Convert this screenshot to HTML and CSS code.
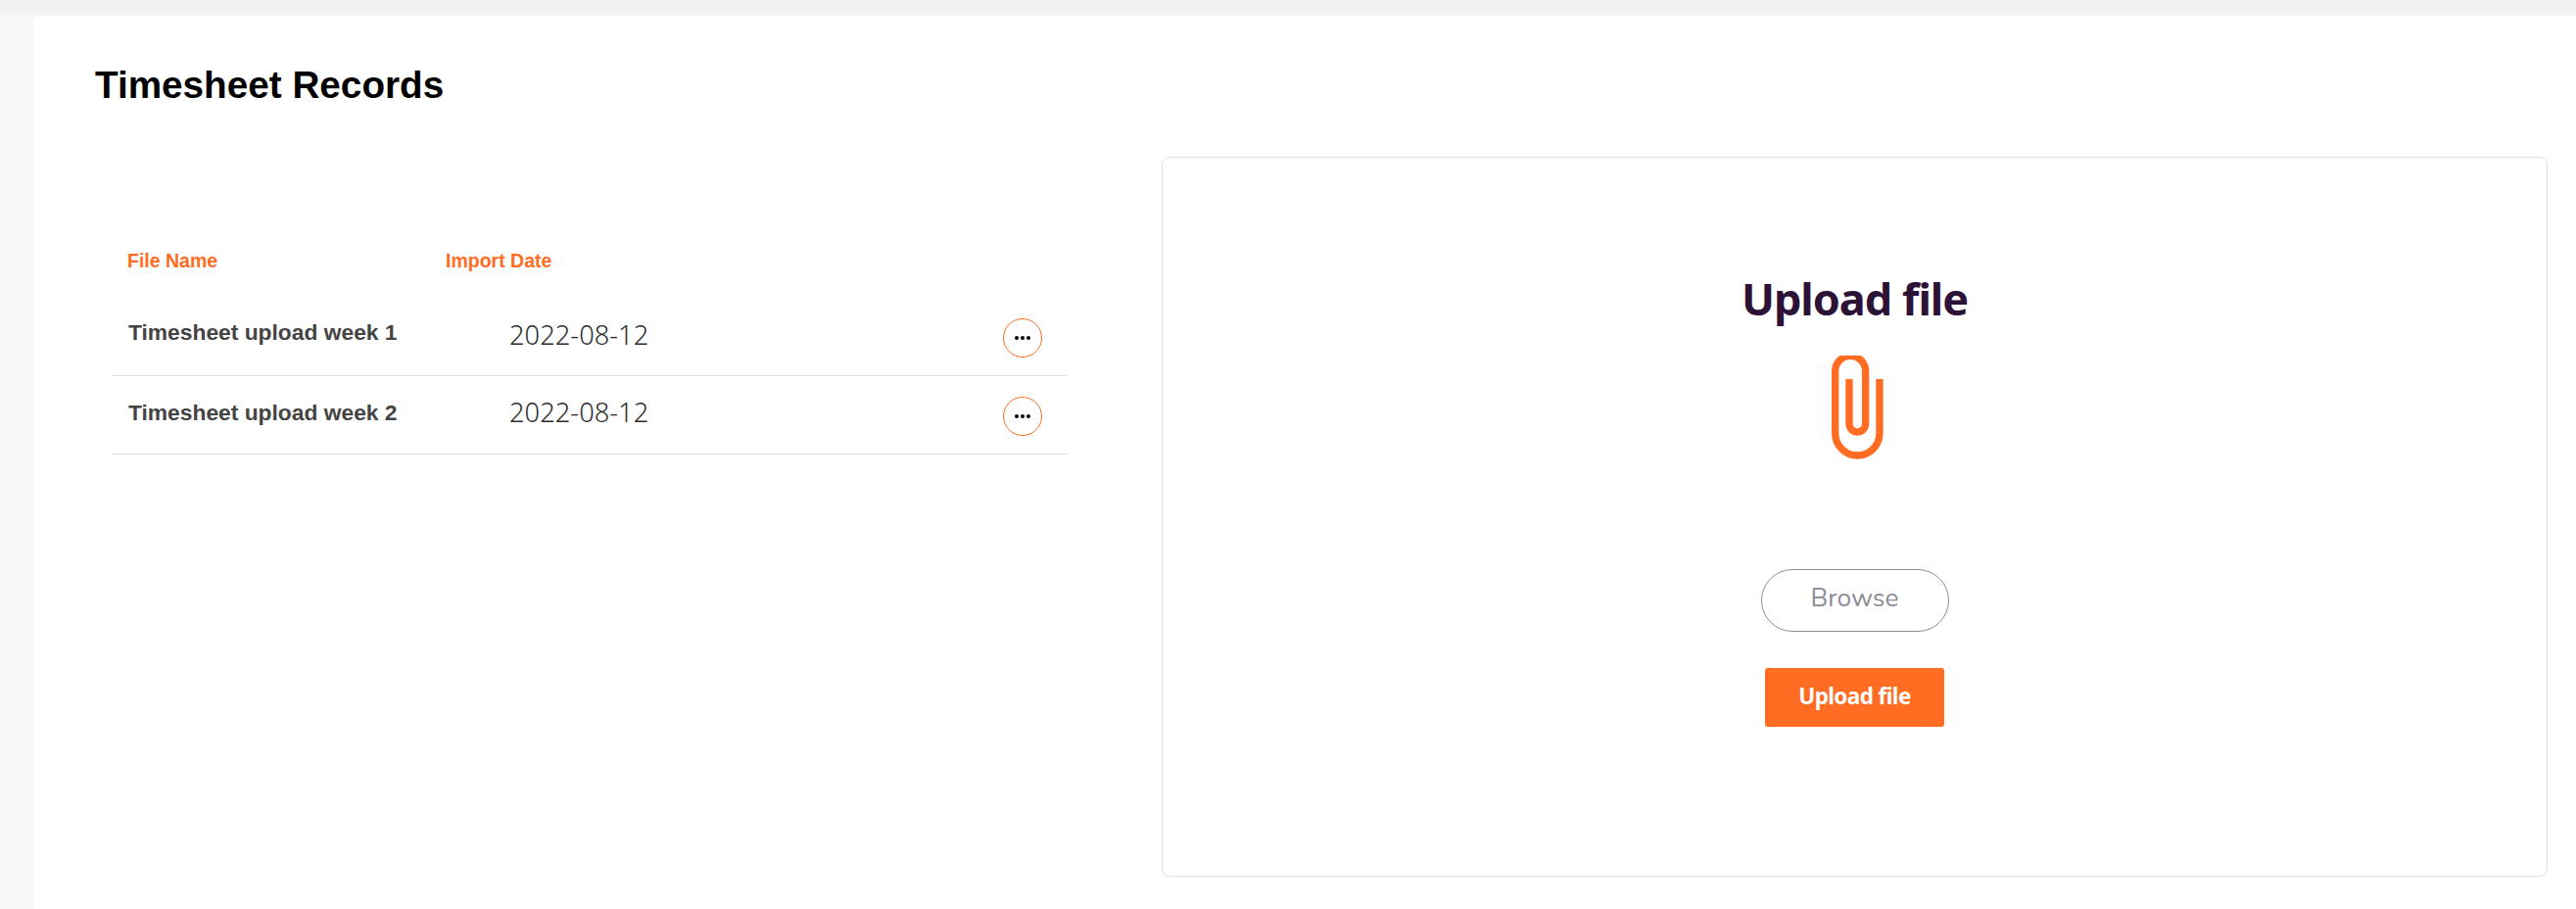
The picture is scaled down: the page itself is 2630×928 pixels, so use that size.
FILE: index.html
```html
<!DOCTYPE html>
<html lang="en">
<head>
<meta charset="utf-8">
<title>Timesheet Records</title>
<link rel="stylesheet" href="styles.css">
</head>
<body>
<div class="topshade"></div>
<main class="card">
  <h1 class="title">Timesheet Records</h1>
  <div class="columns">
    <section class="records">
      <div class="thead">
        <span class="th-name">File Name</span>
        <span class="th-date">Import Date</span>
      </div>
      <div class="row row-first">
        <span class="file">Timesheet upload week 1</span>
        <span class="date">2022-08-12</span>
        <button class="more" aria-label="More"><i></i><i></i><i></i></button>
      </div>
      <div class="row row-second">
        <span class="file">Timesheet upload week 2</span>
        <span class="date">2022-08-12</span>
        <button class="more" aria-label="More"><i></i><i></i><i></i></button>
      </div>
    </section>
    <section class="upload">
      <h2 class="upload-title">Upload file</h2>
      <svg class="clip" viewBox="390 310 160 318" aria-hidden="true">
        <path d="M444 382V519A25 25 0 0 0 494 519V357.5A46.5 46.5 0 0 0 401 357.5V548A68 68 0 0 0 537 548V382" fill="none" stroke="#ff6c22" stroke-width="22"/>
      </svg>
      <button class="browse">Browse</button>
      <button class="submit">Upload file</button>
    </section>
  </div>
</main>
</body>
</html>
```
FILE: styles.css
```css
* { box-sizing: border-box; }
html, body { margin: 0; height: 928px; overflow: hidden; }
body {
  background: #f7f7f7;
  font-family: "Liberation Sans", Arial, sans-serif;
  position: relative;
  padding: 16px 0 0 34px;
}
.topshade {
  position: absolute;
  top: 0; left: 0; right: 0;
  height: 16px;
  background: linear-gradient(#eeeeee, #f5f5f5);
}
.card {
  position: relative;
  background: #fff;
  border-radius: 8px 0 0 0;
  height: 912px;
  padding: 49px 29px 0 63px;
}
.title {
  margin: 0;
  font-size: 38.7px;
  line-height: 44px;
  font-weight: 700;
  color: #000;
}
.columns {
  display: grid;
  grid-template-columns: 1089px 1415px;
  margin-top: 51px;
}
.records { width: 975px; margin-left: 17px; padding-top: 95px; }
.thead {
  display: flex;
  height: 22px;
  font-size: 19.5px;
  line-height: 22px;
  font-weight: 700;
  color: #ff6c22;
  padding-left: 16px;
}
.th-name { width: 325px; }
.row {
  display: flex;
  align-items: center;
  height: 80px;
  border-bottom: 1px solid #dedede;
  padding: 0 0 6px 17px;
}
.row-first { height: 107px; padding: 22px 0 0 17px; }
.row-first .file { margin-bottom: 4px; }
.row-second .file { margin-top: 2px; }
.file { width: 389px; font-size: 22.8px; font-weight: 700; color: #444; }
.date {
  font-family: "Noto Sans", sans-serif;
  font-weight: 300;
  font-size: 27.3px;
  color: #2e2e2e;
}
.more {
  margin: 8px 25px 0 auto;
  width: 40px;
  height: 40px;
  padding: 0;
  border: 1.5px solid #ff6c22;
  border-radius: 50%;
  background: #fff;
  display: flex;
  align-items: center;
  justify-content: center;
  gap: 2.3px;
}
.more i { width: 4px; height: 4px; border-radius: 50%; background: #000; }
.upload {
  height: 735px;
  border: 1px solid #e0e0e0;
  border-radius: 8px;
  display: flex;
  flex-direction: column;
  align-items: center;
  padding-top: 114px;
}
.upload-title {
  margin: 0;
  font-family: "Noto Sans", sans-serif;
  font-size: 45px;
  letter-spacing: -1px;
  line-height: 60px;
  font-weight: 700;
  color: #2d1238;
}
.clip { width: 53.3px; height: 106px; margin: 28px 0 0 7px; display: block; }
.browse {
  margin-top: 112px;
  width: 192px;
  height: 64px;
  border: 1px solid #8a8d94;
  border-radius: 32px;
  background: #fff;
  color: #8a8d94;
  font-family: "Nunito", "Noto Sans", sans-serif;
  font-size: 26.3px;
  padding: 0 0 6px;
}
.submit {
  margin-top: 37px;
  width: 183px;
  height: 60px;
  border: 0;
  border-radius: 3px;
  background: #ff6c22;
  color: #fff;
  font-family: "Noto Sans", sans-serif;
  font-weight: 700;
  font-size: 22.5px;
  letter-spacing: -0.6px;
  padding: 0 0 4px;
}
```
